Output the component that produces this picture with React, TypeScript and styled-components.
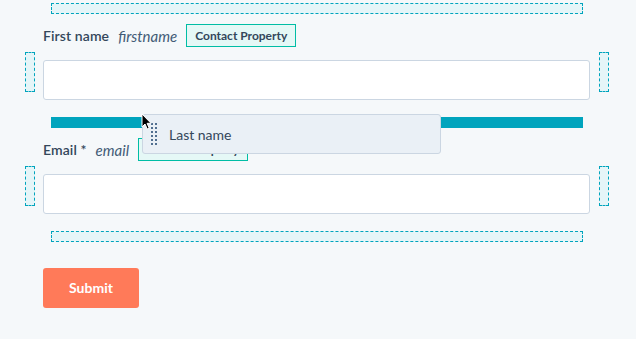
import React from "react";
import styled, { createGlobalStyle } from "styled-components";

const Global = createGlobalStyle`
  html, body { margin: 0; padding: 0; background: #f5f8fa; }
  body { font-family: Lato, "Noto Sans", sans-serif; color: #33475b; }
  * { box-sizing: border-box; }
`;

const Page = styled.div`
  position: relative;
  width: 636px;
  height: 339px;
  padding: 3px 0 0 25px;
  background: #f5f8fa;
`;

const Form = styled.div`
  width: 584px;
  display: flex;
  flex-direction: column;
`;

const DropZone = styled.div<{ $mt?: number }>`
  margin: ${(p) => p.$mt ?? 0}px 26px 0 26px;
  height: 11px;
  border: 1px dashed #00a4bd;
  background: #e5f5f8;
`;

const Bar = styled.div<{ $mt?: number }>`
  margin: ${(p) => p.$mt ?? 0}px 26px 0 26px;
  height: 11px;
  background: #00a4bd;
`;

const LabelRow = styled.div`
  margin: 10px 0 0 18px;
  height: 23px;
  display: flex;
  align-items: center;
  gap: 9px;
`;

const Label = styled.span`
  font-size: 14px;
  font-weight: 600;
  color: #33475b;
  letter-spacing: 0.1px;
`;

const Internal = styled.span`
  font-size: 15px;
  font-style: italic;
  color: #425b76;
`;

const Badge = styled.span`
  height: 23px;
  padding: 0 8px;
  display: inline-flex;
  align-items: center;
  border: 1px solid #00bda5;
  background: #e5f8f6;
  font-size: 12px;
  font-weight: 700;
  color: #33475b;
`;

const InputRow = styled.div`
  margin-top: 5px;
  display: flex;
  align-items: flex-start;
`;

const SideZone = styled.div`
  width: 10px;
  height: 40px;
  border: 1px dashed #00a4bd;
  background: #e5f5f8;
  flex: none;
`;

const Input = styled.div`
  margin: 8px 9px 0 8px;
  width: 547px;
  height: 40px;
  border: 1px solid #cbd6e2;
  border-radius: 3px;
  background: #fff;
`;

const Submit = styled.button`
  margin: 26px 0 0 18px;
  width: 96px;
  height: 40px;
  border: none;
  border-radius: 3px;
  background: #ff7a59;
  color: #fff;
  font-family: Lato, "Noto Sans", sans-serif;
  font-weight: 700;
  font-size: 14px;
  padding: 0 0 2px 0;
`;

const DragCard = styled.div`
  position: absolute;
  left: 142px;
  top: 114px;
  width: 299px;
  height: 40px;
  border: 1px solid #cbd6e2;
  border-radius: 3px;
  background: #eaf0f6;
  display: flex;
  align-items: center;
  padding-left: 8px;
  gap: 12px;
`;

const Handle = styled.svg`
  flex: none;
`;

const CardText = styled.span`
  font-size: 14px;
  color: #33475b;
`;

const Cursor = styled.svg`
  position: absolute;
  left: 141px;
  top: 113px;
`;

function Field({ label, internal }: { label: string; internal: string }) {
  return (
    <>
      <LabelRow>
        <Label>{label}</Label>
        <Internal>{internal}</Internal>
        <Badge>Contact Property</Badge>
      </LabelRow>
      <InputRow>
        <SideZone />
        <Input />
        <SideZone />
      </InputRow>
    </>
  );
}

export default function App() {
  const dots = [];
  for (let r = 0; r < 6; r++) {
    for (let c = 0; c < 2; c++) {
      dots.push(<rect key={`${r}-${c}`} x={c * 4} y={r * 4} width={2} height={2} fill="#516f90" />);
    }
  }
  return (
    <Page>
      <Global />
      <Form>
        <DropZone />
        <Field label="First name" internal="firstname" />
        <Bar $mt={17} />
        <Field label="Email *" internal="email" />
        <DropZone $mt={17} />
        <Submit>Submit</Submit>
      </Form>
      <DragCard>
        <Handle width="6" height="22" viewBox="0 0 6 22">{dots}</Handle>
        <CardText>Last name</CardText>
      </DragCard>
      <Cursor width="12" height="18" viewBox="0 0 12 18">
        <path d="M1 1 L1 14 L4 11 L6.2 16 L8.2 15.1 L6.1 10.3 L10 10.3 Z" fill="#000" stroke="#fff" strokeWidth="1" strokeLinejoin="round" />
      </Cursor>
    </Page>
  );
}
